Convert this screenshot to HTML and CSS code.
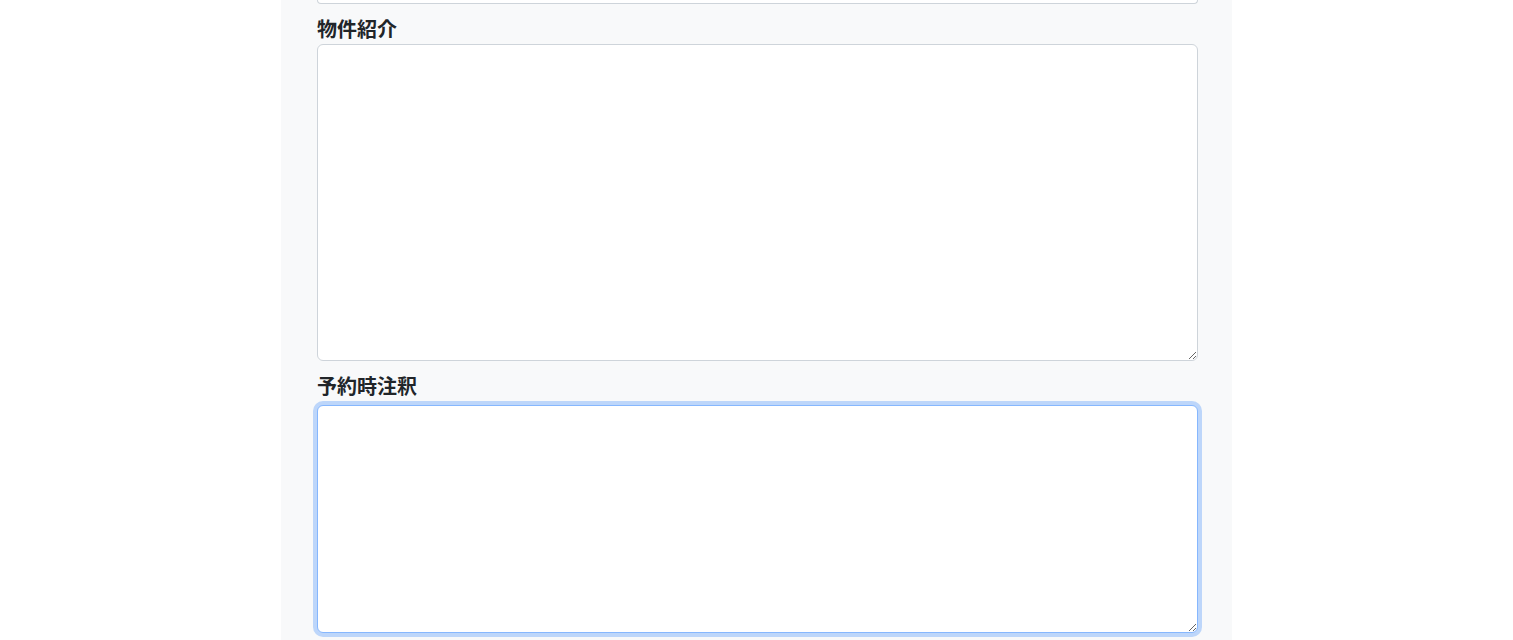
FILE: index.html
```html
<!DOCTYPE html>
<html lang="ja">
<head>
<meta charset="utf-8">
<title>物件情報</title>
<link rel="stylesheet" href="styles.css">
</head>
<body>
<div class="panel">
  <div class="prev-field"></div>
  <div class="field">
    <label class="label" for="intro">物件紹介</label>
    <textarea id="intro" class="control control-tall"></textarea>
  </div>
  <div class="field">
    <label class="label label-gap" for="note">予約時注釈</label>
    <textarea id="note" class="control control-short is-focused"></textarea>
  </div>
</div>
</body>
</html>
```

FILE: styles.css
```css
html, body {
  margin: 0;
  padding: 0;
  background: #ffffff;
}
body {
  font-family: "Noto Sans CJK JP", "Noto Sans", sans-serif;
  color: #212529;
  overflow: hidden;
}
.panel {
  width: 951px;
  box-sizing: border-box;
  margin: 0 auto;
  padding: 0 34px 40px 36px;
  background: #f8f9fa;
  min-height: 700px;
}
.prev-field {
  height: 4px;
  box-sizing: border-box;
  background: #ffffff;
  border: 1px solid #ced4da;
  border-top: none;
  border-radius: 0 0 6px 6px;
}
.field {
  margin-top: 11px;
}
.label {
  display: block;
  font-size: 20px;
  font-weight: 700;
  line-height: 28px;
  margin-bottom: 1px;
}
.label-gap {
  margin-bottom: 5px;
}
.control {
  display: block;
  width: 100%;
  box-sizing: border-box;
  margin: 0;
  padding: 6px 12px;
  font-family: inherit;
  font-size: 16px;
  line-height: 1.5;
  color: #212529;
  background: #ffffff;
  border: 1px solid #ced4da;
  border-radius: 6px;
  outline: none;
  resize: vertical;
}
.control-tall {
  height: 317px;
}
.control-short {
  height: 228px;
}
.is-focused {
  border-color: #86b7fe;
  box-shadow: 0 0 0 4px rgba(13, 110, 253, 0.25);
}
```
